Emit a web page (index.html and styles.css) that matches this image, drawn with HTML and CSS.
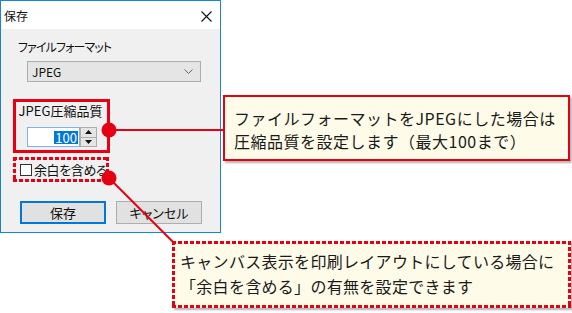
FILE: index.html
```html
<!DOCTYPE html>
<html lang="ja">
<head>
    <meta charset="UTF-8">
    <title>保存</title>
    <link rel="stylesheet" href="styles.css">
</head>
<body>
    <div class="page">
        <div class="dialog">
            <div class="titlebar">
                <span class="title">保存</span>
                <svg class="close" width="11" height="11" viewBox="0 0 11 11">
                    <path d="M0.5 0.5 L10.5 10.5 M10.5 0.5 L0.5 10.5" stroke="#111" stroke-width="1.1" fill="none"/>
                </svg>
            </div>
            <div class="dialog-body">
                <div class="field-label">ファイルフォーマット</div>
                <div class="select">
                    <span>JPEG</span>
                    <svg width="9" height="5" viewBox="0 0 9 5">
                        <path d="M0.5 0.5 L4.5 4.5 L8.5 0.5" stroke="#666" fill="none"/>
                    </svg>
                </div>
                <div class="quality">
                    <div class="quality-label">JPEG圧縮品質</div>
                    <div class="spin">
                        <div class="spin-input"><span class="selected">100</span></div>
                        <div class="spin-btns">
                            <div class="spin-btn"><svg width="7" height="4" viewBox="0 0 7 4"><path d="M0 4 L3.5 0 L7 4 Z" fill="#111"/></svg></div>
                            <div class="spin-btn"><svg width="7" height="4" viewBox="0 0 7 4"><path d="M0 0 L3.5 4 L7 0 Z" fill="#111"/></svg></div>
                        </div>
                    </div>
                </div>
                <div class="margin-opt dashed">
                    <span class="checkbox"></span>
                    <span class="check-label">余白を含める</span>
                </div>
                <div class="buttons">
                    <button type="button" class="btn btn-default">保存</button>
                    <button type="button" class="btn">キャンセル</button>
                </div>
            </div>
        </div>

        <!-- 引き出し線 -->
        <svg class="leaders" width="572" height="313" viewBox="0 0 572 313">
            <line x1="109" y1="130" x2="224" y2="130" stroke="#e60012" stroke-width="2"/>
            <line x1="109" y1="178" x2="174" y2="243" stroke="#e60012" stroke-width="2"/>
            <circle cx="109" cy="130" r="7.5" fill="#e60012"/>
            <circle cx="109" cy="178" r="7.5" fill="#e60012"/>
        </svg>

        <div class="callout callout-quality">
            ファイルフォーマットをJPEGにした場合は<br>
            圧縮品質を設定します（最大100まで）
        </div>
        <div class="callout callout-margin dashed">
            キャンバス表示を印刷レイアウトにしている場合に<br>
            「余白を含める」の有無を設定できます
        </div>
    </div>
</body>
</html>
```

FILE: styles.css
```css
body {
    margin: 0;
    background: #fff;
    font-family: "Noto Sans CJK JP", sans-serif;
    color: #111;
}
.page {
    position: relative;
    width: 572px;
    height: 313px;
    overflow: hidden;
}

/* ダイアログ */
.dialog {
    width: 221px;
    height: 233px;
    box-sizing: border-box;
    border: 1px solid #1883d7;
    background: #f0f0f0;
    font-size: 13px;
    font-feature-settings: "palt";
}
.titlebar {
    height: 28px;
    background: #fff;
    display: flex;
    align-items: center;
    justify-content: space-between;
    padding: 0 8px 0 3px;
}
.title {
    font-size: 12px;
    line-height: 16px;
    margin-top: 2px;
}
.close {
    margin-top: 2px;
}
.dialog-body {
    padding-top: 10px;
}
.field-label {
    margin-left: 17px;
    font-size: 12px;
    line-height: 16px;
    letter-spacing: -0.9px;
}
.select {
    margin: 6px 0 0 26px;
    width: 174px;
    height: 21px;
    box-sizing: border-box;
    border: 1px solid #adadad;
    background: #e5e5e5;
    display: flex;
    align-items: center;
    justify-content: space-between;
    padding: 0 7px 0 4px;
    font-size: 12px;
}

.quality {
    margin: 17px 0 0 12px;
    width: 97px;
    height: 54px;
    box-sizing: border-box;
    border: 3px solid #e60012;
    display: flex;
    flex-direction: column;
    align-items: center;
}
.quality-label {
    line-height: 17px;
    margin-left: -2px;
}
.spin {
    margin-top: 8px;
    display: flex;
    height: 20px;
    margin-left: 1px;
}
.spin-input {
    width: 53px;
    box-sizing: border-box;
    border: 1px solid #7eb4ea;
    background: #fff;
    display: flex;
    align-items: center;
    justify-content: flex-end;
    padding-right: 1px;
}
.selected {
    background: #0078d7;
    color: #fff;
    line-height: 13px;
    padding: 0 1px;
}
.spin-btns {
    width: 17px;
    display: flex;
    flex-direction: column;
}
.spin-btn {
    flex: 1;
    box-sizing: border-box;
    border: 1px solid #adadad;
    background: #e5e5e5;
    display: flex;
    align-items: center;
    justify-content: center;
}
.spin-btn + .spin-btn {
    border-top: none;
}

/* 破線の枠 */
.dashed {
    background:
        repeating-linear-gradient(90deg, #e60012 0 4px, transparent 4px 6px) top left / 100% 3px no-repeat,
        repeating-linear-gradient(90deg, #e60012 0 4px, transparent 4px 6px) bottom left / 100% 3px no-repeat,
        repeating-linear-gradient(180deg, #e60012 0 4px, transparent 4px 6px) top left / 3px 100% no-repeat,
        repeating-linear-gradient(180deg, #e60012 0 4px, transparent 4px 6px) top right / 3px 100% no-repeat;
}
.margin-opt {
    margin: 4px 0 0 12px;
    width: 96px;
    height: 25px;
    box-sizing: border-box;
    display: flex;
    align-items: center;
    padding-left: 7px;
}
.checkbox {
    width: 12px;
    height: 12px;
    box-sizing: border-box;
    border: 1px solid #333;
    background: #fff;
    margin-right: 2px;
}
.check-label {
    letter-spacing: -0.4px;
}

.buttons {
    margin: 19px 0 0 19px;
    display: flex;
    gap: 10px;
}
.btn {
    width: 86px;
    height: 23px;
    box-sizing: border-box;
    border: 1px solid #adadad;
    background: #e1e1e1;
    font-family: inherit;
    font-size: 13px;
    font-feature-settings: "palt";
    color: #111;
    padding: 0;
}
.btn-default {
    border: 2px solid #0078d7;
}

/* 注釈 */
.leaders {
    position: absolute;
    left: 0;
    top: 0;
}
.callout {
    position: absolute;
    box-sizing: border-box;
    font-size: 16px;
    letter-spacing: 0.5px;
    color: #1a1a1a;
    background-color: #fffbe9;
    box-shadow: 2px 2px 2px rgba(0, 0, 0, 0.3);
}
.callout-quality {
    left: 223px;
    top: 95px;
    width: 347px;
    height: 66px;
    border: 2px solid #e60012;
    padding: 10px 0 0 9px;
    line-height: 23px;
}
.callout-margin {
    left: 172px;
    top: 241px;
    width: 399px;
    height: 67px;
    padding: 8px 0 0 8px;
    line-height: 25px;
    letter-spacing: 0.3px;
    background-color: #fffbe9;
}
```
